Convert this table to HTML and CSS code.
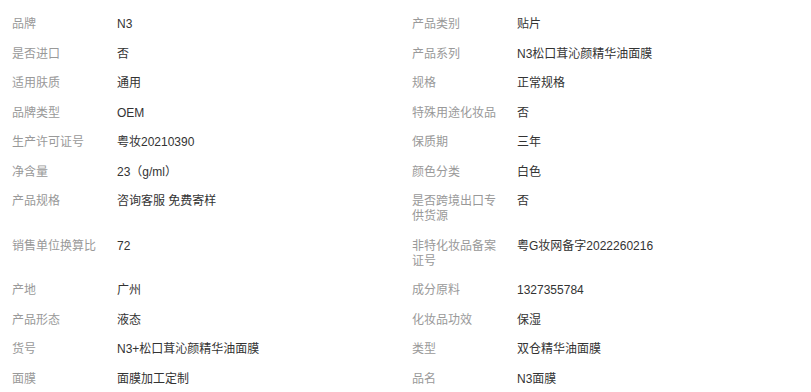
FILE: index.html
```html
<!DOCTYPE html>
<html lang="zh-CN">
<head>
<meta charset="utf-8">
<title>产品参数</title>
<link rel="stylesheet" href="styles.css">
</head>
<body>
<div class="attrs">
  <div class="item"><span class="label">品牌</span><span class="value">N3</span></div>
  <div class="item"><span class="label">产品类别</span><span class="value">贴片</span></div>
  <div class="item"><span class="label">是否进口</span><span class="value">否</span></div>
  <div class="item"><span class="label">产品系列</span><span class="value">N3松口茸沁颜精华油面膜</span></div>
  <div class="item"><span class="label">适用肤质</span><span class="value">通用</span></div>
  <div class="item"><span class="label">规格</span><span class="value">正常规格</span></div>
  <div class="item"><span class="label">品牌类型</span><span class="value">OEM</span></div>
  <div class="item"><span class="label">特殊用途化妆品</span><span class="value">否</span></div>
  <div class="item"><span class="label">生产许可证号</span><span class="value">粤妆20210390</span></div>
  <div class="item"><span class="label">保质期</span><span class="value">三年</span></div>
  <div class="item"><span class="label">净含量</span><span class="value">23（g/ml）</span></div>
  <div class="item"><span class="label">颜色分类</span><span class="value">白色</span></div>
  <div class="item"><span class="label">产品规格</span><span class="value">咨询客服 免费寄样</span></div>
  <div class="item"><span class="label">是否跨境出口专供货源</span><span class="value">否</span></div>
  <div class="item"><span class="label">销售单位换算比</span><span class="value">72</span></div>
  <div class="item"><span class="label">非特化妆品备案证号</span><span class="value">粤G妆网备字2022260216</span></div>
  <div class="item"><span class="label">产地</span><span class="value">广州</span></div>
  <div class="item"><span class="label">成分原料</span><span class="value">1327355784</span></div>
  <div class="item"><span class="label">产品形态</span><span class="value">液态</span></div>
  <div class="item"><span class="label">化妆品功效</span><span class="value">保湿</span></div>
  <div class="item"><span class="label">货号</span><span class="value">N3+松口茸沁颜精华油面膜</span></div>
  <div class="item"><span class="label">类型</span><span class="value">双仓精华油面膜</span></div>
  <div class="item"><span class="label">面膜</span><span class="value">面膜加工定制</span></div>
  <div class="item"><span class="label">品名</span><span class="value">N3面膜</span></div>
</div>
</body>
</html>
```
FILE: styles.css
```css
html, body {
  margin: 0;
  padding: 0;
  background: #fff;
}
body {
  font-family: "Liberation Sans", "Noto Sans CJK SC", sans-serif;
  font-size: 12px;
  line-height: 15px;
}
.attrs {
  display: grid;
  grid-template-columns: 400px 400px;
  padding: 10px 0 0 12px;
}
.item {
  display: flex;
  padding: 7.25px 0;
}
.label {
  width: 90px;
  flex: none;
  margin-right: 15px;
  color: #999;
}
.value {
  color: #333;
}
```
